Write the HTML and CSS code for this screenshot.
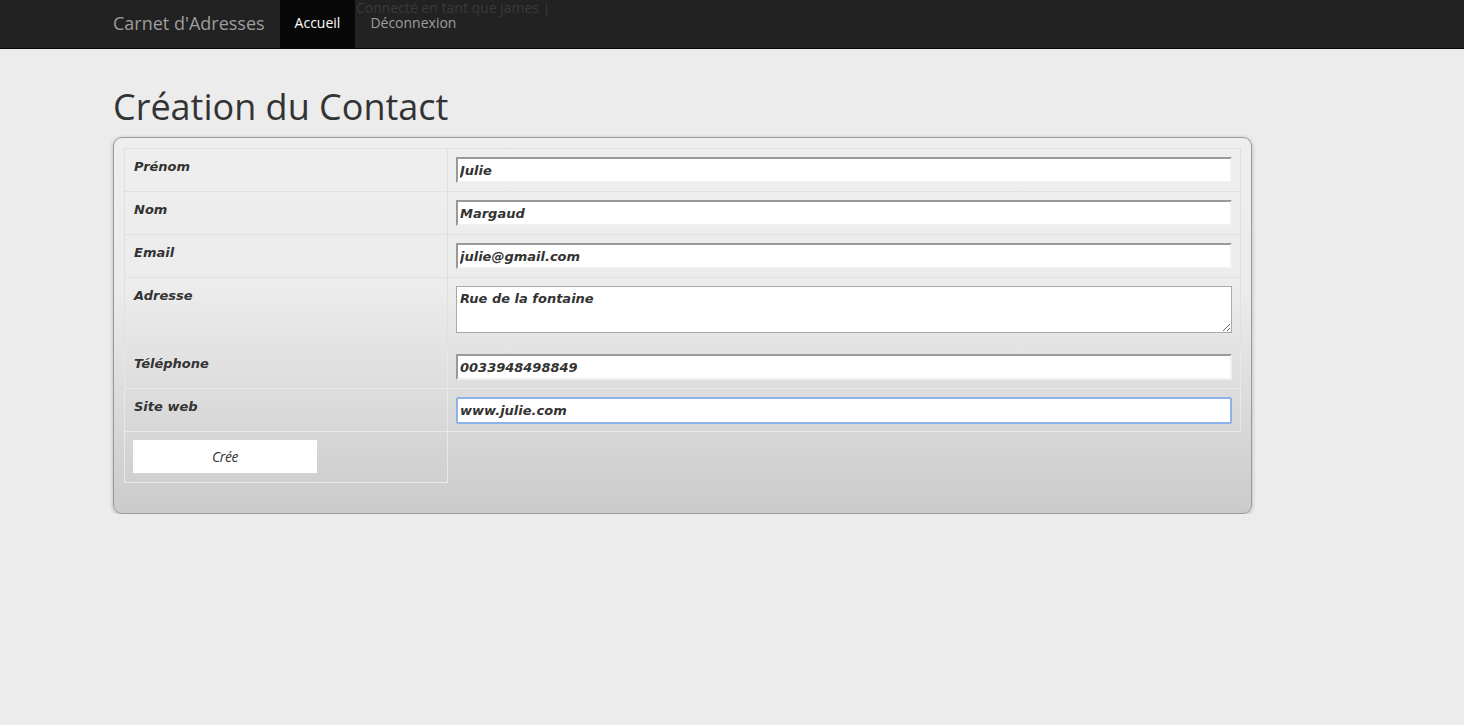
FILE: index.html
```html
<!DOCTYPE html>
<html lang="fr">
<head>
<meta charset="utf-8">
<title>Carnet d'Adresses</title>
<link rel="stylesheet" href="styles.css">
</head>
<body>
<nav class="navbar">
  <div class="container nav-inner">
    <a class="brand" href="#">Carnet d'Adresses</a>
    <ul class="nav">
      <li class="active"><a href="#">Accueil</a></li>
      <li><a href="#">Déconnexion</a></li>
    </ul>
    <span class="user">Connecté en tant que james |</span>
  </div>
</nav>
<main class="container">
  <h1>Création du Contact</h1>
  <form class="panel">
    <table class="form-table">
      <tr><th>Prénom</th><td><input class="field" type="text" value="Julie"></td></tr>
      <tr><th>Nom</th><td><input class="field" type="text" value="Margaud"></td></tr>
      <tr><th>Email</th><td><input class="field" type="text" value="julie@gmail.com"></td></tr>
      <tr><th>Adresse</th><td><textarea class="area">Rue de la fontaine</textarea></td></tr>
      <tr class="low"><th>Téléphone</th><td><input class="field" type="text" value="0033948498849"></td></tr>
      <tr class="low"><th>Site web</th><td><input class="field focused" type="text" value="www.julie.com"></td></tr>
      <tr class="submit-row"><td class="submit-cell"><button class="btn" type="button">Crée</button></td><td class="empty"></td></tr>
    </table>
  </form>
</main>
</body>
</html>
```
FILE: styles.css
```css
* { box-sizing: border-box; }
html, body { margin: 0; padding: 0; }
body {
  background: #ececec;
  font-family: "Open Sans", "DejaVu Sans", sans-serif;
  font-size: 14px;
  line-height: 1.42857;
  color: #333;
}
.container {
  padding-left: 113px;
  padding-right: 15px;
}
.navbar {
  background: #222;
  border-bottom: 1px solid #080808;
  height: 49px;
}
.nav-inner {
  position: relative;
  display: flex;
  align-items: stretch;
  height: 48px;
}
.brand {
  color: #9d9d9d;
  font-size: 18px;
  line-height: 20px;
  padding: 13px 15px 15px 0;
  text-decoration: none;
  height: 48px;
}
.nav {
  list-style: none;
  margin: 0;
  padding: 0;
  display: flex;
}
.nav li a {
  display: block;
  padding: 13px 15px 15px;
  line-height: 20px;
  height: 48px;
  color: #9d9d9d;
  text-decoration: none;
}
.nav li.active a {
  background: #080808;
  color: #fff;
}
.user {
  position: absolute;
  left: 356px;
  top: -2px;
  color: #3a3a3a;
  font-size: 14px;
  line-height: 20px;
}
h1 {
  font-family: "Open Sans", sans-serif;
  font-weight: 400;
  font-size: 36px;
  line-height: 1.1;
  margin: 38px 0 10px;
  color: #333;
}
.panel {
  width: 1139px;
  border: 1px solid #9a9a9a;
  border-radius: 9px;
  padding: 10px 10px 30px;
  background: linear-gradient(to bottom, #eeeeee 0%, #ececec 40%, #cbcbcb 100%);
  box-shadow: 0 1px 4px rgba(0,0,0,0.25);
}
.form-table {
  width: 100%;
  border-collapse: collapse;
  font-family: "DejaVu Sans", Verdana, sans-serif;
  font-size: 13px;
  font-weight: bold;
  font-style: italic;
  color: #333;
}
.form-table th, .form-table td {
  border: 1px solid #e0e0e0;
  padding: 8px;
  vertical-align: top;
  text-align: left;
  line-height: 18px;
}
.form-table .low th, .form-table .low td,
.form-table .submit-row td {
  border-color: #e8e8e8;
}
.form-table th {
  width: 323px;
  padding-left: 9px;
  padding-top: 9px;
}
.field {
  display: block;
  width: 100%;
  height: 26px;
  font: inherit;
  color: #333;
  background: #fff;
  border-style: solid;
  border-width: 2px;
  border-color: #999 #f0f0f0 #f0f0f0 #999;
  padding: 1px 2px 0;
  margin: 0;
  outline: none;
}
.field.focused {
  border: 2px solid #8db2ea;
  border-radius: 2px;
  height: 27px;
  margin-bottom: -1px;
}
.area {
  display: block;
  width: 100%;
  height: 47px;
  margin: 0 0 4px;
  font: inherit;
  color: #333;
  background: #fff;
  border: 1px solid #a9a9a9;
  padding: 3px 3px;
  resize: both;
}
.submit-row .empty {
  border: none;
}
.btn {
  display: block;
  width: 184px;
  height: 34px;
  background: #fff;
  border: none;
  border-bottom: 1px solid #d4d4d4;
  font-family: "Open Sans", sans-serif;
  font-style: italic;
  font-weight: 400;
  font-size: 14px;
  color: #333;
  padding: 0;
  letter-spacing: -0.4px;
}
```
